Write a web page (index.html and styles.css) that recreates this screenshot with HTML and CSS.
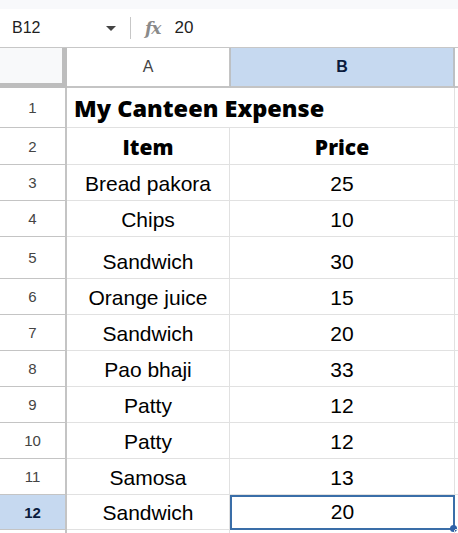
FILE: index.html
```html
<!DOCTYPE html>
<html>
<head>
<meta charset="utf-8">
<link rel="stylesheet" href="styles.css">
</head>
<body>
<div class="top-strip"></div>
<div class="formula-bar">
  <div class="name-box">
    <span class="cell-ref">B12</span>
    <svg class="caret" width="10" height="6" viewBox="0 0 10 6"><path d="M0 0 L10 0 L5 5 Z" fill="#444"/></svg>
  </div>
  <div class="sep"></div>
  <span class="fx">fx</span>
  <span class="fvalue">20</span>
</div>
<div class="sheet">
  <div class="row head">
    <div class="corner"></div>
    <div class="colh">A</div>
    <div class="colh sel">B</div>
    <div class="colh rest"></div>
  </div>
  <div class="row h40">
    <div class="rn">1</div>
    <div class="c title">My Canteen Expense</div>
    <div class="c nob"></div>
    <div class="c rest"></div>
  </div>
  <div class="row h37">
    <div class="rn">2</div>
    <div class="c bold">Item</div>
    <div class="c bold">Price</div>
    <div class="c rest"></div>
  </div>
  <div class="row h36">
    <div class="rn">3</div>
    <div class="c">Bread pakora</div>
    <div class="c">25</div>
    <div class="c rest"></div>
  </div>
  <div class="row h36">
    <div class="rn">4</div>
    <div class="c">Chips</div>
    <div class="c">10</div>
    <div class="c rest"></div>
  </div>
  <div class="row h42">
    <div class="rn">5</div>
    <div class="c">Sandwich</div>
    <div class="c">30</div>
    <div class="c rest"></div>
  </div>
  <div class="row h36">
    <div class="rn">6</div>
    <div class="c">Orange juice</div>
    <div class="c">15</div>
    <div class="c rest"></div>
  </div>
  <div class="row h36">
    <div class="rn">7</div>
    <div class="c">Sandwich</div>
    <div class="c">20</div>
    <div class="c rest"></div>
  </div>
  <div class="row h36">
    <div class="rn">8</div>
    <div class="c">Pao bhaji</div>
    <div class="c">33</div>
    <div class="c rest"></div>
  </div>
  <div class="row h36">
    <div class="rn">9</div>
    <div class="c">Patty</div>
    <div class="c">12</div>
    <div class="c rest"></div>
  </div>
  <div class="row h36">
    <div class="rn">10</div>
    <div class="c">Patty</div>
    <div class="c">12</div>
    <div class="c rest"></div>
  </div>
  <div class="row h36">
    <div class="rn">11</div>
    <div class="c">Samosa</div>
    <div class="c">13</div>
    <div class="c rest"></div>
  </div>
  <div class="row h35">
    <div class="rn selrow">12</div>
    <div class="c">Sandwich</div>
    <div class="c active">20<span class="handle"></span></div>
    <div class="c rest"></div>
  </div>
  <div class="row h36">
    <div class="rn"></div>
    <div class="c"></div>
    <div class="c"></div>
    <div class="c rest"></div>
  </div>
</div>
</body>
</html>
```
FILE: styles.css
```css
html, body {
  margin: 0;
  padding: 0;
  background: #fff;
  overflow: hidden;
}
body {
  width: 458px;
  height: 533px;
  font-family: "Liberation Sans", Arial, sans-serif;
}
.top-strip {
  height: 9px;
  background: #f8f9fb;
}
.formula-bar {
  height: 38px;
  display: flex;
  align-items: center;
  border-bottom: 1px solid #c7c7c7;
  background: #fff;
}
.name-box {
  width: 118px;
  display: flex;
  align-items: center;
  justify-content: space-between;
  padding-left: 12px;
  padding-right: 2px;
  box-sizing: border-box;
}
.cell-ref {
  font-size: 16px;
  color: #1f1f1f;
}
.caret {
  margin-top: 1px;
}
.sep {
  width: 1px;
  height: 22px;
  background: #c7c7c7;
  margin-left: 12px;
}
.fx {
  font-family: "DejaVu Serif", "Liberation Serif", serif;
  font-style: italic;
  font-weight: bold;
  font-size: 17px;
  color: #8a8a8a;
  margin-left: 14px;
  letter-spacing: -1px;
}
.fvalue {
  font-size: 17px;
  color: #1f1f1f;
  margin-left: 14px;
}
.sheet {
  display: flex;
  flex-direction: column;
}
.row {
  display: grid;
  grid-template-columns: 67px 163px 225px 1fr;
  box-sizing: border-box;
}
.head { height: 40px; }
.h35 { height: 35px; }
.h36 { height: 36px; }
.h37 { height: 37px; }
.h40 { height: 40px; }
.h42 { height: 42px; }

.corner {
  background: #f8f9fa;
  border-right: 5px solid #bdbdbd;
  border-bottom: 5px solid #bdbdbd;
  box-sizing: border-box;
}
.colh {
  display: flex;
  align-items: center;
  justify-content: center;
  font-size: 16px;
  color: #444;
  background: #fff;
  border-bottom: 2px solid #c4c4c4;
  border-right: 1px solid #c4c4c4;
  box-sizing: border-box;
}
.colh.sel {
  background: #c6d9f0;
  color: #0b1c3d;
  font-weight: bold;
  border-right: 2px solid #bcc0c4;
  border-left: 1px solid #bcc0c4;
}
.colh.rest {
  border-right: none;
}
.rn {
  display: flex;
  align-items: center;
  justify-content: center;
  font-size: 15px;
  color: #444;
  border-right: 2px solid #c4c4c4;
  border-bottom: 1px solid #c4c4c4;
  box-sizing: border-box;
}
.rn.selrow {
  background: #c6d9f0;
  color: #0b1c3d;
  font-weight: bold;
  font-size: 15px;
}
.c {
  display: flex;
  align-items: flex-end;
  justify-content: center;
  padding-bottom: 4px;
  font-size: 21px;
  color: #000;
  border-right: 1px solid #e1e1e1;
  border-bottom: 1px solid #e1e1e1;
  box-sizing: border-box;
  white-space: nowrap;
  position: relative;
}
.c.rest {
  border-right: none;
}
.c.title {
  justify-content: flex-start;
  padding-left: 7px;
  padding-bottom: 3px;
  font-family: "Open Sans", "Lato", sans-serif;
  font-weight: 800;
  font-size: 23.5px;
  overflow: visible;
  border-right: none;
  z-index: 1;
}
.c.bold {
  font-family: "Open Sans", "Lato", sans-serif;
  font-weight: 800;
  font-size: 21px;
  padding-bottom: 3px;
}
.c.active {
  border: 2px solid #3a6ea8;
}
.handle {
  position: absolute;
  right: -4px;
  bottom: -4px;
  width: 7px;
  height: 7px;
  border-radius: 50%;
  background: #2f62a8;
}
```
